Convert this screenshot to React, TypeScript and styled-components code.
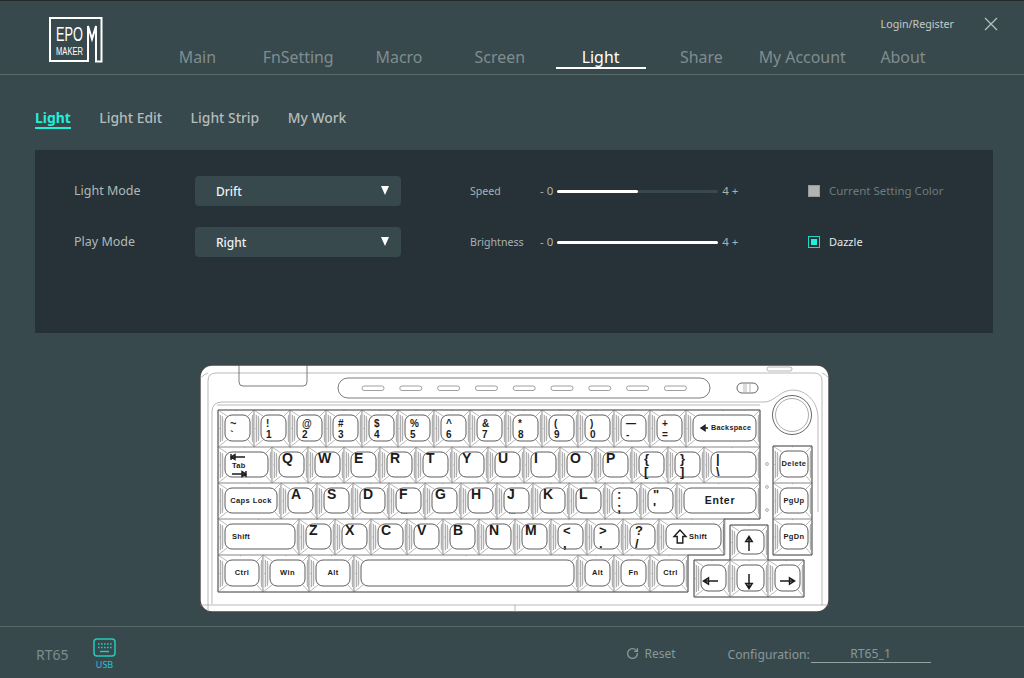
import { ReactNode } from "react";
import styled, { createGlobalStyle } from "styled-components";
import { RotateCw } from "lucide-react";

const GlobalStyle = createGlobalStyle`
  html, body {
    margin: 0;
    padding: 0;
    background: #37494d;
  }
  * {
    box-sizing: border-box;
  }
`;

const Page = styled.div`
  width: 1024px;
  height: 678px;
  overflow: hidden;
  display: flex;
  flex-direction: column;
  background: #37494d;
  border-top: 1px solid #23282a;
  font-family: "Noto Sans", "Open Sans", sans-serif;
`;

const Header = styled.header`
  display: flex;
  flex: 0 0 74px;
  border-bottom: 1px solid #5c6b6c;
`;

const LogoBox = styled.div`
  margin: 16px 44px 0 49px;
  width: 54px;
  height: 46px;
`;

const HeaderRight = styled.div`
  display: flex;
  flex-direction: column;
  flex: 1;
`;

const TopBar = styled.div`
  display: flex;
  justify-content: flex-end;
  align-items: center;
  gap: 30px;
  height: 43px;
  padding: 3px 26px 0 0;
`;

const LoginLink = styled.span`
  font-size: 10.7px;
  color: #c3cbcb;
`;

const Nav = styled.nav`
  display: flex;
`;

const NavItem = styled.div`
  flex: 0 0 100.8px;
  display: flex;
  justify-content: center;
`;

const NavLabel = styled.span<{ $active?: boolean }>`
  width: 90px;
  height: 25px;
  line-height: 26px;
  text-align: center;
  white-space: nowrap;
  font-size: 15.9px;
  color: ${(p) => (p.$active ? "#ffffff" : "#808d8e")};
  border-bottom: 2px solid ${(p) => (p.$active ? "#ffffff" : "transparent")};
`;

const SubTabs = styled.div`
  display: flex;
  gap: 28.5px;
  height: 75px;
  padding: 32px 0 0 35px;
`;

const SubTab = styled.span<{ $active?: boolean }>`
  height: 22px;
  line-height: 21px;
  font-size: 13.9px;
  font-weight: ${(p) => (p.$active ? 700 : 500)};
  color: ${(p) => (p.$active ? "#1ff0da" : "#b4bcbc")};
  border-bottom: 2px solid ${(p) => (p.$active ? "#1ff0da" : "transparent")};
`;

const Panel = styled.section`
  display: grid;
  grid-template-columns: 396px 338px 1fr;
  grid-auto-rows: 30px;
  row-gap: 21px;
  height: 183px;
  margin: 0 31px 0 35px;
  padding: 26px 0 0 39px;
  background: #263237;
`;

const Field = styled.div`
  display: flex;
  align-items: center;
`;

const FieldLabel = styled.label`
  flex: 0 0 121px;
  font-size: 12.5px;
  line-height: 30px;
  height: 30px;
  color: #b0b9b9;
`;

const Select = styled.div`
  position: relative;
  width: 206px;
  height: 30px;
  padding-left: 21px;
  line-height: 31px;
  font-size: 12px;
  font-weight: 500;
  color: #eef1f1;
  background: #37494d;
  border-radius: 4px;

  &::after {
    content: "";
    position: absolute;
    right: 12px;
    top: 10px;
    border-left: 4.5px solid transparent;
    border-right: 4.5px solid transparent;
    border-top: 9px solid #ffffff;
  }
`;

const SliderLabel = styled.label`
  flex: 0 0 70px;
  font-size: 10.6px;
  line-height: 30px;
  height: 30px;
  color: #aab3b3;
`;

const SliderEnd = styled.span`
  font-size: 11.5px;
  line-height: 29px;
  height: 30px;
  color: #aab3b3;
  white-space: nowrap;
`;

const Track = styled.div`
  width: 161px;
  height: 3px;
  margin: 0 4px;
  border-radius: 2px;
  background: #37494d;
`;

const TrackFill = styled.div`
  height: 100%;
  border-radius: 2px;
  background: #ffffff;
`;

const OptionRow = styled.div`
  display: flex;
  align-items: center;
  gap: 9px;
`;

const Check = styled.span<{ $on?: boolean }>`
  display: flex;
  align-items: center;
  justify-content: center;
  width: 12px;
  height: 12px;
  background: ${(p) => (p.$on ? "transparent" : "#b3b3b3")};
  border: 1px solid ${(p) => (p.$on ? "#1fd8c6" : "#9a9a9a")};

  &::after {
    content: "";
    display: ${(p) => (p.$on ? "block" : "none")};
    width: 6px;
    height: 6px;
    background: #1ff0da;
  }
`;

const OptionText = styled.span<{ $on?: boolean }>`
  font-size: ${(p) => (p.$on ? 11 : 11.5)}px;
  line-height: 29px;
  height: 30px;
  color: ${(p) => (p.$on ? "#e3e8e8" : "#6f7c7e")};
`;

const Stage = styled.div`
  flex: 1;
  padding: 30px 0 0 198px;
`;

const KeyboardSvg = styled.svg`
  display: block;
`;

const Footer = styled.footer`
  display: flex;
  align-items: flex-start;
  flex: 0 0 52px;
  border-top: 1px solid #566667;
`;

const ModelName = styled.span`
  margin: 18px 24px 0 36px;
  font-size: 14px;
  color: #7f8c8d;
`;

const UsbBox = styled.div`
  display: flex;
  flex-direction: column;
  align-items: center;
  width: 24px;
  margin-top: 11px;
`;

const UsbLabel = styled.span`
  font-size: 9px;
  line-height: 11px;
  margin-top: 2px;
  color: #2bc4d0;
`;

const ResetButton = styled.div`
  display: flex;
  align-items: center;
  gap: 6px;
  margin: 18px 0 0 509px;
  width: 102px;
  font-size: 12px;
  color: #8b9798;
`;

const ConfigLabel = styled.span`
  margin-top: 19px;
  font-size: 12.2px;
  color: #8b9798;
  width: 83px;
`;

const ConfigValue = styled.span`
  width: 120px;
  height: 25px;
  margin-top: 11px;
  padding-top: 7px;
  text-align: center;
  font-size: 12.2px;
  color: #8b9798;
  border-bottom: 1px solid #97a2a3;
`;

const Legend = styled.text<{ $size: number; $spacing?: number }>`
  font-family: "Liberation Sans", Arial, sans-serif;
  font-weight: 700;
  font-size: ${(p) => p.$size}px;
  letter-spacing: ${(p) => p.$spacing ?? 0}px;
  fill: #1c1c1c;
`;

const LogoText = styled.text`
  font-family: "Liberation Sans", Arial, sans-serif;
  fill: #ffffff;
`;

const Skirt = styled.path`
  fill: none;
  stroke: #8a8a8a;
  stroke-width: 0.6;
`;

const SkirtBand = styled.path`
  fill: #ebebeb;
  stroke: none;
`;

const Edge = styled.path`
  fill: none;
  stroke: #5a5a5a;
  stroke-width: 1;
`;

const KeyCap = styled.rect`
  fill: #ffffff;
  stroke: #4a4a4a;
  stroke-width: 0.9;
`;

const Ink = styled.path`
  fill: none;
  stroke: #1c1c1c;
  stroke-width: 1.4;
`;

type KeySpec = {
  w: number;
  top?: string;
  bottom?: string;
  letter?: string;
  center?: string;
  size?: number;
  tx?: number;
  extra?: ReactNode;
};

const duo = (top: string, bottom: string, size?: number): KeySpec => ({ w: 36, top, bottom, size });
const letter = (l: string, extra?: ReactNode): KeySpec => ({ w: 36, letter: l, extra });
const named = (w: number, center: string, size = 7.5, tx?: number, extra?: ReactNode): KeySpec => ({
  w,
  center,
  size,
  tx,
  extra,
});

const dots = (
  <Legend x={12} y={31} $size={6} $spacing={0.6}>
    ...
  </Legend>
);

const tabArrows = (
  <>
    <Ink d="M13 7v6M13 10h14M13 10l4-2.5v5z" />
    <Ink d="M28 24v6M14 27h14M28 27l-4-2.5v5z" />
  </>
);

const rows: { y: number; h: number; keys: KeySpec[] }[] = [
  {
    y: 410,
    h: 37,
    keys: [
      duo("~", "`", 11),
      duo("!", "1", 10),
      duo("@", "2", 10),
      duo("#", "3", 10),
      duo("$", "4", 10),
      duo("%", "5", 10),
      duo("^", "6", 10),
      duo("&", "7", 10),
      duo("*", "8", 10),
      duo("(", "9", 10),
      duo(")", "0", 10),
      duo("—", "-", 10),
      duo("+", "=", 10),
      named(74, "Backspace", 7.2, 25, <Ink d="M15 18h7M15 18l4-2.6v5.2z" />),
    ],
  },
  {
    y: 447,
    h: 36,
    keys: [
      named(54, "Tab", 7.5, 14, tabArrows),
      ..."QWERTYUIOP".split("").map((l) => letter(l)),
      duo("{", "[", 13),
      duo("}", "]", 13),
      { ...duo("|", "\\", 13), w: 56 },
    ],
  },
  {
    y: 483,
    h: 36,
    keys: [
      named(63, "Caps Lock", 7.5),
      letter("A"),
      letter("S"),
      letter("D"),
      letter("F", dots),
      letter("G"),
      letter("H"),
      letter("J", dots),
      letter("K"),
      letter("L"),
      duo(":", ";", 13),
      duo('"', "'", 13),
      named(83, "Enter", 10.5),
    ],
  },
  {
    y: 519,
    h: 36,
    keys: [
      named(81, "Shift", 7.5, 14),
      ..."ZXCVBNM".split("").map((l) => letter(l)),
      duo("<", ",", 13),
      duo(">", ".", 13),
      duo("?", "/", 13),
      named(66, "Shift", 7.5, 30, <Ink d="M21 11l-6 6.5h3.2V24h5.6v-6.5H27z" />),
    ],
  },
  {
    y: 555,
    h: 37,
    keys: [
      named(45, "Ctrl"),
      named(46, "Win"),
      named(45, "Alt"),
      { w: 224 },
      named(36, "Alt"),
      named(36, "Fn"),
      named(38, "Ctrl"),
    ],
  },
];

function Key({ x, y, h, spec }: { x: number; y: number; h: number; spec: KeySpec }) {
  const { w } = spec;
  const cx = 7;
  const cy = 5;
  const cw = w - 11;
  const ch = h - 11;
  const s = spec.size ?? 9.5;
  return (
    <g transform={`translate(${x} ${y})`}>
      <SkirtBand
        d={`M0 2L6 9V${h - 9}L0 ${h - 2}Z M${w} 2L${w - 3} 8V${h - 8}L${w} ${h - 2}Z`}
      />
      <Skirt
        d={`M0 0H${w}V${h}H0Z M0 0L${cx + 2} ${cy + 1} M${w} 0L${cx + cw - 2} ${cy + 1}
          M0 ${h}L${cx + 2} ${cy + ch - 1} M${w} ${h}L${cx + cw - 2} ${cy + ch - 1}
          M2.5 5V${h - 5} M${w - 1.5} 5V${h - 5} M4.5 6V${h - 6}
          M${w / 2} 0v1.2 M1.2 ${h / 2}h1`}
      />
      <KeyCap x={cx} y={cy} width={cw} height={ch} rx={7} />
      {spec.letter && (
        <Legend x={10} y={16} $size={14}>
          {spec.letter}
        </Legend>
      )}
      {spec.top && (
        <>
          <Legend x={12} y={spec.size === 13 ? 16 : 17} $size={s}>
            {spec.top}
          </Legend>
          <Legend x={12} y={spec.size === 13 ? 29 : 28} $size={s}>
            {spec.bottom}
          </Legend>
        </>
      )}
      {spec.center &&
        (spec.tx !== undefined ? (
          <Legend x={spec.tx} y={h / 2 + (spec.center === "Tab" ? 3 : 1.8)} $size={spec.size ?? 7.5} $spacing={0.3}>
            {spec.center}
          </Legend>
        ) : (
          <Legend
            x={cx + cw / 2}
            y={h / 2 + (spec.size ?? 7.5) / 3 - 0.7}
            textAnchor="middle"
            $size={spec.size ?? 7.5}
            $spacing={spec.size && spec.size > 9 ? 0.7 : 0.4}
          >
            {spec.center}
          </Legend>
        ))}
      {spec.extra}
    </g>
  );
}

function Arrow({ dir }: { dir: "up" | "down" | "left" | "right" }) {
  const rotate = { up: 0, right: 90, down: 180, left: 270 }[dir];
  return <Ink d="M0 7V-6M0 -7.5L-3.2 -2.5H3.2Z" transform={`rotate(${rotate})`} style={{ strokeWidth: 1.5 }} />;
}

function Keyboard() {
  const slots = Array.from({ length: 9 }, (_, i) => 362 + i * 37.8);
  return (
    <KeyboardSvg width={634} height={252} viewBox="198 363 634 252">
      {/* body */}
      <rect x={200} y={365} width={629} height={247} rx={12} fill="#fff" stroke="#444" strokeWidth={1.4} />
      <Skirt d="M208 612V381Q208 373 216 373H814Q822 373 822 381V605H208M200 605H208M822 605H829M200 378Q205 374 208 373M829 378Q825 374 822 373M515 605V612" />
      <Edge d="M239 365V382Q239 386 243 386H303Q307 386 307 382V365" style={{ strokeWidth: 0.8 }} />
      {/* led strip */}
      <Edge d="M348 378H700A10 10 0 0 1 700 398H348A10 10 0 0 1 348 378Z" style={{ strokeWidth: 0.8 }} />
      {slots.map((x) => (
        <rect key={x} x={x} y={386} width={22} height={4.5} rx={2.2} fill="#fff" stroke="#777" strokeWidth={0.7} />
      ))}
      {/* switch and pill */}
      <rect x={737} y={383} width={21} height={10} rx={5} fill="#fff" stroke="#555" strokeWidth={0.9} />
      <Skirt d="M746 384V392M750 384V392M744 384V392" />
      <rect x={767} y={367} width={25} height={4} rx={2} fill="#fff" stroke="#888" strokeWidth={0.6} />
      {/* plate outline with knob recess */}
      <Skirt d="M212 604V412Q212 402 222 402H764C772 402 776 396 784 392C800 385 818 398 818 418V512" />
      <Skirt d="M217 405H760" />
      <circle cx={792} cy={415} r={19.5} fill="#fff" stroke="#555" strokeWidth={0.9} />
      <circle cx={792} cy={415} r={16.5} fill="#fff" stroke="#888" strokeWidth={0.7} />
      {rows.map((row) => {
        let x = 218;
        return row.keys.map((spec, i) => {
          const el = <Key key={`${row.y}-${i}`} x={x} y={row.y} h={row.h} spec={spec} />;
          x += spec.w;
          return el;
        });
      })}
      <Key x={773} y={446} h={37} spec={{ w: 39, center: "Delete", size: 7.5 }} />
      <Key x={773} y={483} h={36} spec={{ w: 39, center: "PgUp", size: 7.5 }} />
      <Key x={773} y={519} h={36} spec={{ w: 39, center: "PgDn", size: 7.5 }} />
      <Key x={730} y={525} h={35} spec={{ w: 38 }} />
      <Key x={694} y={560} h={37} spec={{ w: 36 }} />
      <Key x={730} y={560} h={37} spec={{ w: 38 }} />
      <Key x={768} y={560} h={37} spec={{ w: 36 }} />
      {/* key wells */}
      <Edge d="M218 410H760V519H724V555H688V592H218Z" />
      <Edge d="M773 446H812V555H773Z" />
      <Edge d="M730 525H768V560H804V597H694V560H730Z" />
      <g transform="translate(749 544)">
        <Arrow dir="up" />
      </g>
      <g transform="translate(711 581)">
        <Arrow dir="left" />
      </g>
      <g transform="translate(749 581)">
        <Arrow dir="down" />
      </g>
      <g transform="translate(787 581)">
        <Arrow dir="right" />
      </g>
      {[464, 487, 510].map((y) => (
        <circle key={y} cx={767} cy={y} r={1.4} fill="#fff" stroke="#777" strokeWidth={0.6} />
      ))}
    </KeyboardSvg>
  );
}

function Logo() {
  return (
    <svg width={54} height={46} viewBox="0 0 54 46">
      <path d="M1 44V1H52.5V44.5H47V9L43 22L39 9V44Z" fill="none" stroke="#fff" strokeWidth={2} />
      <LogoText x={7} y={24} fontSize={21} textLength={27} lengthAdjust="spacingAndGlyphs">
        EPO
      </LogoText>
      <LogoText x={7} y={38} fontSize={10.5} textLength={27} lengthAdjust="spacingAndGlyphs">
        MAKER
      </LogoText>
    </svg>
  );
}

function CloseIcon() {
  return (
    <svg width={14} height={14} viewBox="0 0 14 14">
      <path d="M1 1L13 13M13 1L1 13" stroke="#b9c2c2" strokeWidth={1.2} />
    </svg>
  );
}

function UsbIcon() {
  return (
    <svg width={23} height={19} viewBox="0 0 23 19" fill="none">
      <rect x={1} y={1} width={21} height={17} rx={3} stroke="#1fcdbb" strokeWidth={1.5} />
      <path
        d="M5 6h1.6M8 6h1.6M11 6h1.6M14 6h1.6M17 6h1.6M5 9.5h1.6M8 9.5h1.6M11 9.5h1.6M14 9.5h1.6M17 9.5h1.6M7 13.5h9"
        stroke="#1fcdbb"
        strokeWidth={1.5}
      />
    </svg>
  );
}

const navItems = ["Main", "FnSetting", "Macro", "Screen", "Light", "Share", "My Account", "About"];
const subTabs = ["Light", "Light Edit", "Light Strip", "My Work"];

function Slider({ label, percent }: { label: string; percent: number }) {
  return (
    <Field>
      <SliderLabel>{label}</SliderLabel>
      <SliderEnd>- 0</SliderEnd>
      <Track>
        <TrackFill style={{ width: `${percent}%` }} />
      </Track>
      <SliderEnd>4 +</SliderEnd>
    </Field>
  );
}

export default function App() {
  return (
    <Page>
      <GlobalStyle />
      <Header>
        <LogoBox>
          <Logo />
        </LogoBox>
        <HeaderRight>
          <TopBar>
            <LoginLink>Login/Register</LoginLink>
            <CloseIcon />
          </TopBar>
          <Nav>
            {navItems.map((item) => (
              <NavItem key={item}>
                <NavLabel $active={item === "Light"}>{item}</NavLabel>
              </NavItem>
            ))}
          </Nav>
        </HeaderRight>
      </Header>
      <SubTabs>
        {subTabs.map((tab, i) => (
          <SubTab key={tab} $active={i === 0}>
            {tab}
          </SubTab>
        ))}
      </SubTabs>
      <Panel>
        <Field>
          <FieldLabel>Light Mode</FieldLabel>
          <Select>Drift</Select>
        </Field>
        <Slider label="Speed" percent={50} />
        <OptionRow>
          <Check />
          <OptionText>Current Setting Color</OptionText>
        </OptionRow>
        <Field>
          <FieldLabel>Play Mode</FieldLabel>
          <Select>Right</Select>
        </Field>
        <Slider label="Brightness" percent={100} />
        <OptionRow>
          <Check $on />
          <OptionText $on>Dazzle</OptionText>
        </OptionRow>
      </Panel>
      <Stage>
        <Keyboard />
      </Stage>
      <Footer>
        <ModelName>RT65</ModelName>
        <UsbBox>
          <UsbIcon />
          <UsbLabel>USB</UsbLabel>
        </UsbBox>
        <ResetButton>
          <RotateCw size={13} strokeWidth={2.4} color="#8b9798" />
          Reset
        </ResetButton>
        <ConfigLabel>Configuration:</ConfigLabel>
        <ConfigValue>RT65_1</ConfigValue>
      </Footer>
    </Page>
  );
}
